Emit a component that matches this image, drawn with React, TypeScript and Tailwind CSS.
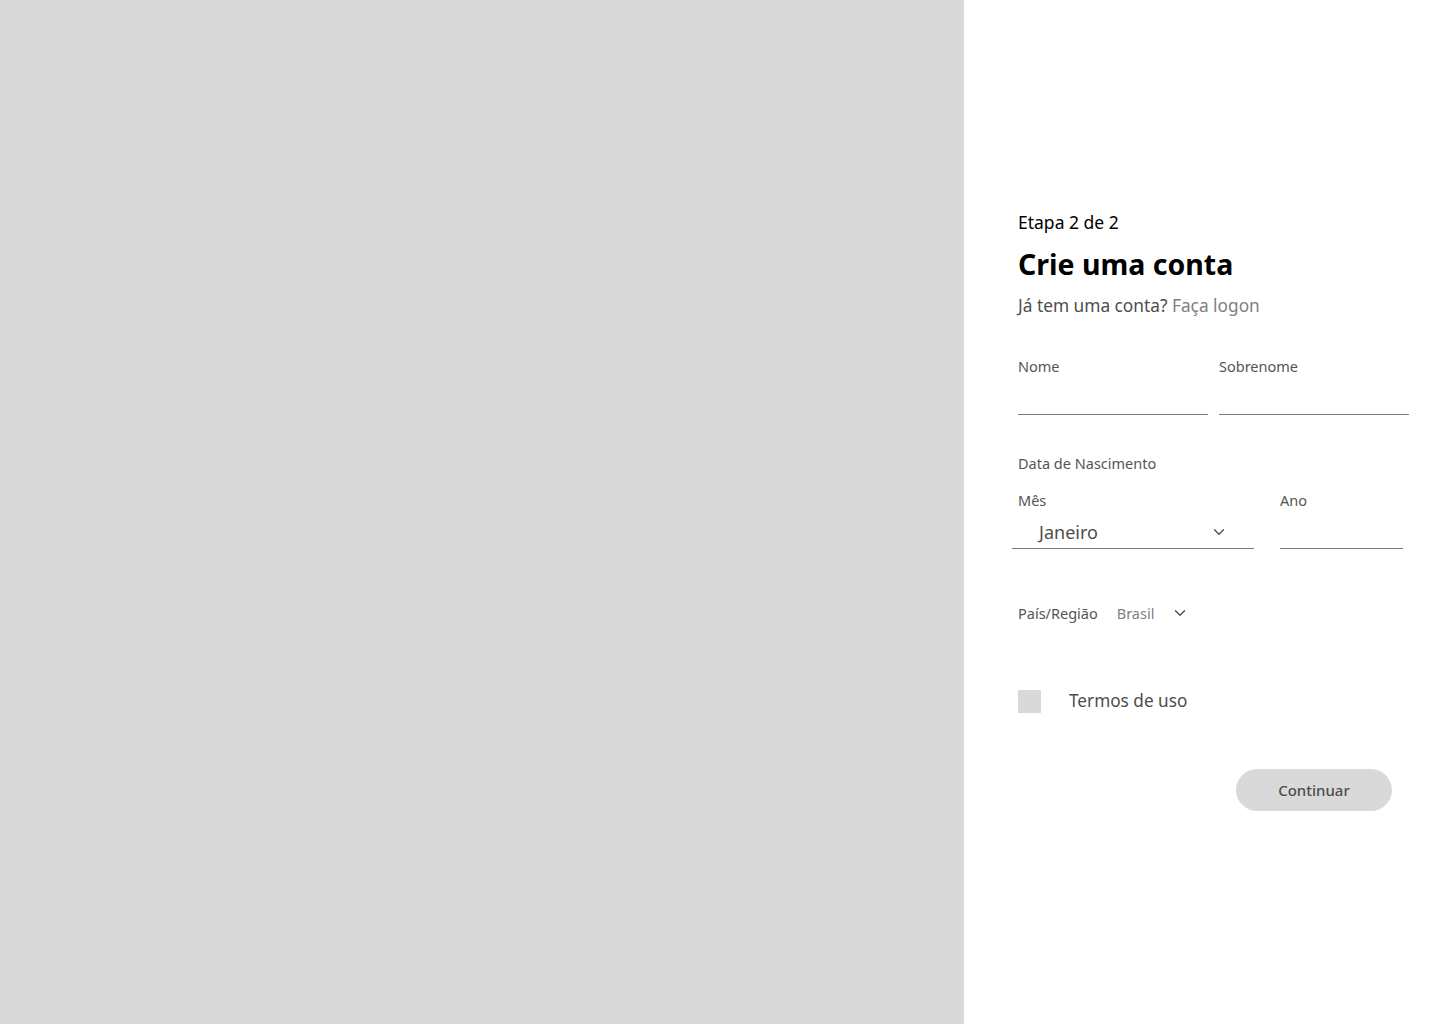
import { ChevronDown } from 'lucide-react'

const font = { fontFamily: '"Noto Sans", "Open Sans", sans-serif' }

function Field({ label, className }: { label: string; className?: string }) {
  return (
    <div className={className}>
      <div className="text-[14.5px] leading-5 text-[#555555]">{label}</div>
      <div className="h-[39px] border-b border-[#7a7a7a]" />
    </div>
  )
}

export default function App() {
  return (
    <div className="flex h-[1024px] w-full" style={font}>
      <div className="w-[964px] shrink-0 bg-[#d9d9d9]" />
      <div className="flex-1 bg-white pl-[54px] pt-[210px]">
        <div className="text-[17.5px] leading-6 text-black">Etapa 2 de 2</div>
        <h1 className="mt-[10px] text-[28.5px] font-bold leading-10 text-black">Crie uma conta</h1>
        <p className="mt-[10px] text-[17.3px] leading-6 text-[#4d4d4d]">
          Já tem uma conta? <span className="text-[#808080]">Faça logon</span>
        </p>

        <div className="mt-[38px] flex gap-[11px]">
          <Field label="Nome" className="w-[190px]" />
          <Field label="Sobrenome" className="w-[190px]" />
        </div>

        <div className="mt-[38px] text-[14.5px] leading-5 text-[#555555]">Data de Nascimento</div>
        <div className="mt-[17px] flex">
          <div className="w-[236px]">
            <div className="text-[14.5px] leading-5 text-[#555555]">Mês</div>
            <div className="-ml-[6px] flex h-[39px] w-[242px] items-center justify-between border-b border-[#7a7a7a] pl-[27px] pr-[26px] pt-[6px]">
              <span className="text-[18px] text-[#4d4d4d]">Janeiro</span>
              <ChevronDown size={18} strokeWidth={1.75} className="text-[#4d4d4d]" />
            </div>
          </div>
          <div className="ml-[26px] w-[123px]">
            <div className="text-[14.5px] leading-5 text-[#555555]">Ano</div>
            <div className="h-[39px] border-b border-[#7a7a7a]" />
          </div>
        </div>

        <div className="mt-[54px] flex items-center text-[14.5px] leading-5">
          <span className="text-[#555555]">País/Região</span>
          <span className="ml-[19px] text-[#808080]">Brasil</span>
          <ChevronDown size={18} strokeWidth={1.75} className="ml-[17px] text-[#4d4d4d]" />
        </div>

        <label className="mt-[66px] flex items-center">
          <span className="h-[23px] w-[23px] bg-[#d9d9d9]" />
          <span className="ml-[28px] text-[17.2px] leading-6 text-[#4d4d4d]">Termos de uso</span>
        </label>

        <button className="ml-[218px] mt-[56px] flex h-[42px] w-[156px] items-center justify-center rounded-full bg-[#d9d9d9] text-[15px] font-medium text-[#4d4d4d]">
          Continuar
        </button>
      </div>
    </div>
  )
}
